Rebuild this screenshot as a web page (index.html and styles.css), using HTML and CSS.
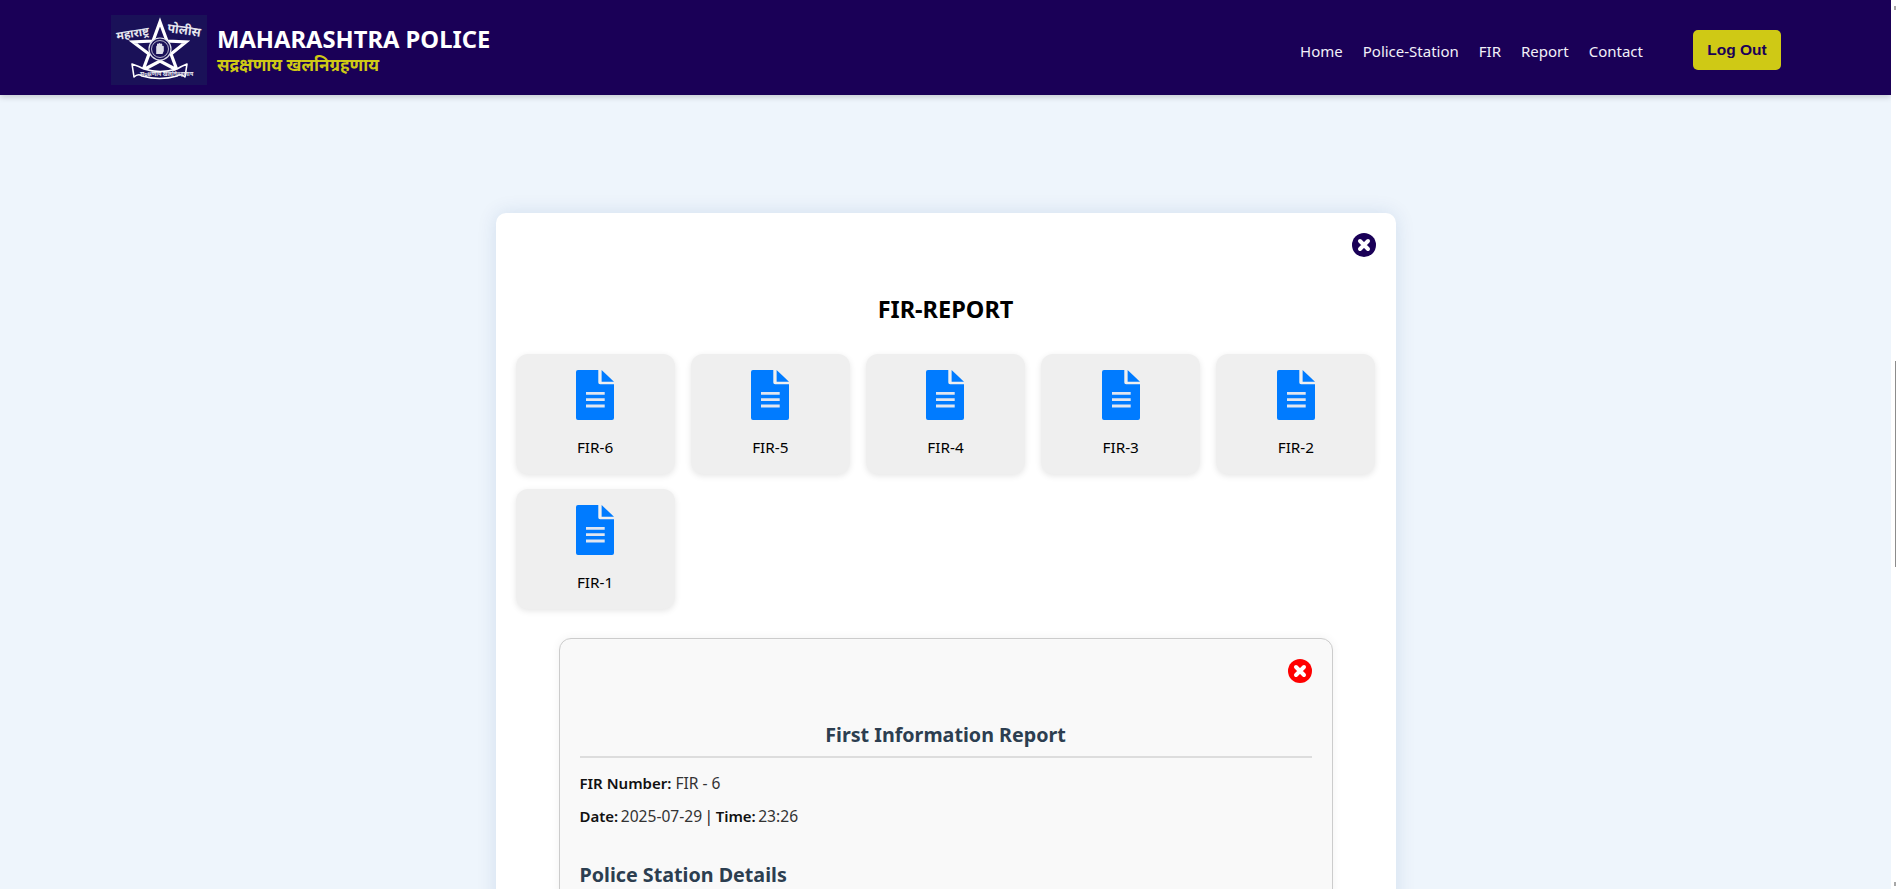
FILE: index.html
```html
<!DOCTYPE html>
<html lang="en">

<head>
    <meta charset="UTF-8">
    <meta name="viewport" content="width=device-width, initial-scale=1.0">
    <title>FIR Report</title>
    <link rel="stylesheet" href="styles.css">
</head>

<body>

    <div class="page">
        <header class="navbar">
            <div class="brand">
                <svg class="logo" viewBox="0 0 96 70" aria-hidden="true">
                    <rect width="96" height="70" fill="#1a1158"/>
                    <text class="logo_text" transform="translate(6 25) rotate(-9)" font-size="11.500">महाराष्ट्र</text>
                    <text class="logo_text" transform="translate(56 17) rotate(8)" font-size="12.500">पोलीस</text>
                    <path d="M49 7 L56 26 L75 27 L60 39 L66 55 L49 46 L32 55 L38 39 L22 27 L42 26 Z" fill="#1a1158" stroke="#fff" stroke-width="3.200" stroke-linejoin="miter"/>
                    <circle cx="49" cy="34" r="11" fill="#1a1158" stroke="#dfe0ea" stroke-width="1.200"/>
                    <circle cx="49" cy="34" r="8.500" fill="none" stroke="#dfe0ea" stroke-width=".8"/>
                    <path d="M45.200 39 V32 Q45.200 30.500 46 30.500 V29 Q46.800 28 47.500 29 V28.500 Q48.500 27.500 49.500 28.500 V29 Q50.500 28 51.200 29 V31 Q52.400 30.500 52.800 31.500 V36 L51.500 39 Z" fill="#dfe0ea"/>
                    <path d="M21 49 Q27 51 33 54 Q49 59 66 54 Q71 51 76 49 L74 62 Q70 58 66 61 Q49 66 31 61 Q27 58 23 62 Z" fill="#1a1158" stroke="#fff" stroke-width="1.600" stroke-linejoin="round"/>
                    <text class="logo_text" x="29" y="61" font-size="5.600">सद्रक्षणाय खलनिग्रहणाय</text>
                </svg>
                <div class="brand_text">
                    <h1>MAHARASHTRA POLICE</h1>
                    <p>सद्रक्षणाय खलनिग्रहणाय</p>
                </div>
            </div>
            <nav class="nav_links">
                <a href="#">Home</a>
                <a href="#">Police-Station</a>
                <a href="#">FIR</a>
                <a href="#">Report</a>
                <a href="#">Contact</a>
                <button class="logout">Log Out</button>
            </nav>
        </header>

        <main class="content">
            <section class="modal">
                <svg class="close_icon close_dark" viewBox="0 0 24 24" aria-hidden="true">
                    <circle cx="12" cy="12" r="12"/>
                    <path d="M8 8 L16 16 M16 8 L8 16"/>
                </svg>
                <h2 class="modal_title">FIR-REPORT</h2>

                <div class="fir_grid">
                    <div class="fir_card"><svg class="doc_icon" viewBox="0 0 38 50"><use href="#doc"/></svg><span>FIR-6</span></div>
                    <div class="fir_card"><svg class="doc_icon" viewBox="0 0 38 50"><use href="#doc"/></svg><span>FIR-5</span></div>
                    <div class="fir_card"><svg class="doc_icon" viewBox="0 0 38 50"><use href="#doc"/></svg><span>FIR-4</span></div>
                    <div class="fir_card"><svg class="doc_icon" viewBox="0 0 38 50"><use href="#doc"/></svg><span>FIR-3</span></div>
                    <div class="fir_card"><svg class="doc_icon" viewBox="0 0 38 50"><use href="#doc"/></svg><span>FIR-2</span></div>
                    <div class="fir_card"><svg class="doc_icon" viewBox="0 0 38 50"><use href="#doc"/></svg><span>FIR-1</span></div>
                </div>

                <article class="report">
                    <svg class="close_icon close_red" viewBox="0 0 24 24" aria-hidden="true">
                        <circle cx="12" cy="12" r="12"/>
                        <path d="M8 8 L16 16 M16 8 L8 16"/>
                    </svg>
                    <h3 class="report_title">First Information Report</h3>
                    <p class="line"><b>FIR Number:</b> FIR - 6</p>
                    <p class="line line_tight"><b>Date:</b> 2025-07-29 <span class="sep">|</span> <b>Time:</b> 23:26</p>
                    <h4 class="section_title">Police Station Details</h4>
                </article>
            </section>
        </main>
    </div>

    <div class="scroll_strip">
        <div class="scroll_thumb"></div>
    </div>

    <svg class="defs" aria-hidden="true">
        <symbol id="doc" viewBox="0 0 38 50">
            <path d="M2 0 H22.300 V12.500 A1.800 1.800 0 0 0 24.100 14.300 H38 V48 A2 2 0 0 1 36 50 H2 A2 2 0 0 1 0 48 V2 A2 2 0 0 1 2 0 Z" fill="#007bff"/>
            <path d="M25.600 0 L38 11.700 H25.600 Z" fill="#007bff"/>
            <path d="M10 23.300 H28.700 M10 29.600 H28.700 M10 36 H28.700" stroke="#e0e6f0" stroke-width="2.800"/>
        </symbol>
    </svg>

</body>

</html>
```

FILE: styles.css
```css
* {
    padding: 0;
    margin: 0;
    box-sizing: border-box;
}

html,
body {
    height: 889px;
    overflow: hidden;
    background: white;
    font-family: "Noto Sans", "Open Sans", sans-serif;
}

body {
    display: flex;
}

.page {
    flex: 1;
    height: 889px;
    overflow: hidden;
    background: #eef5fc;
}

/*scrollbar strip on the right*/
.scroll_strip {
    position: relative;
    display: flex;
    justify-content: flex-end;
    width: 5px;
    padding-top: 361px;
    background: white;
}

.scroll_strip::before,
.scroll_strip::after {
    content: "";
    position: absolute;
    right: 0;
    width: 2px;
    height: 4px;
    background: #a8a8a8;
}

.scroll_strip::before {
    top: 6px;
}

.scroll_strip::after {
    bottom: 3px;
}

.scroll_thumb {
    width: 1px;
    height: 206px;
    background: #8c8c8c;
}

/*navbar*/
.navbar {
    display: flex;
    align-items: center;
    justify-content: space-between;
    height: 95px;
    padding: 5px 110px 0 111px;
    background: #1a0057;
    box-shadow: 0 2px 6px rgba(0, 0, 0, .18);
}

.brand {
    display: flex;
    align-items: center;
    gap: 10px;
}

.logo {
    display: block;
    width: 96px;
    height: 70px;
}

.logo_text {
    fill: #e6e6ee;
    font-family: "Noto Sans", sans-serif;
    font-weight: 700;
}

.brand_text h1 {
    color: white;
    font-size: 23.750px;
    line-height: 28px;
    font-weight: 700;
}

.brand_text p {
    margin-top: 2px;
    color: #cfc915;
    font-size: 17px;
    line-height: 20px;
    font-weight: 700;
}

.nav_links {
    display: flex;
    align-items: center;
}

.nav_links a {
    margin-top: 2px;
    margin-right: 20px;
    color: #f2f0f8;
    font-size: 15px;
    text-decoration: none;
}

.logout {
    width: 88px;
    height: 40px;
    margin-left: 30px;
    border: none;
    border-radius: 5px;
    background: #cfc915;
    color: #1a0057;
    font-family: "Liberation Sans", sans-serif;
    font-size: 15.500px;
    font-weight: 700;
}

/*modal*/
.content {
    display: flex;
    justify-content: center;
    padding-top: 118px;
}

.modal {
    position: relative;
    width: 900px;
    height: 900px;
    padding: 20px;
    border-radius: 10px;
    background: white;
    box-shadow: 0 0 20px rgba(0, 60, 130, .12);
}

.close_icon {
    position: absolute;
    top: 20px;
    right: 20px;
    display: block;
    width: 24px;
    height: 24px;
}

.close_icon path {
    fill: none;
    stroke: white;
    stroke-width: 4;
    stroke-linecap: round;
}

.close_dark {
    fill: #1a0057;
}

.close_red {
    fill: red;
}

.modal_title {
    margin-top: 60px;
    font-size: 23.500px;
    line-height: 32px;
    font-weight: 700;
    text-align: center;
    color: black;
}

.fir_grid {
    display: grid;
    grid-template-columns: repeat(5, 1fr);
    gap: 15px 16px;
    margin-top: 29px;
}

.fir_card {
    display: flex;
    flex-direction: column;
    align-items: center;
    height: 120px;
    padding-top: 16px;
    border-radius: 12px;
    background: #efefef;
    box-shadow: 0 2px 6px rgba(0, 0, 0, .1);
    font-size: 15.300px;
    color: black;
}

.doc_icon {
    display: block;
    width: 38px;
    height: 50px;
    margin-bottom: 17px;
}

.defs {
    display: none;
}

/*report*/
.report {
    position: relative;
    width: 774px;
    height: 400px;
    margin: 29px auto 0;
    padding: 20px;
    border: 1px solid #ccc;
    border-radius: 12px;
    background: #f9f9f9;
    box-shadow: 0 0 10px rgba(0, 0, 0, .06);
}

.report_title {
    margin-top: 61px;
    padding-bottom: 7px;
    border-bottom: 2px solid #ddd;
    color: #2c3e50;
    font-size: 19.700px;
    line-height: 29px;
    font-weight: 700;
    text-align: center;
}

.line {
    margin-top: 10px;
    color: #333;
    font-size: 15.600px;
    line-height: 23px;
}

.line:first-of-type {
    margin-top: 14px;
}

.line_tight {
    word-spacing: -1.600px;
}

.line b {
    color: #111;
    font-size: 15px;
    font-weight: 600;
}

.sep {
    color: #111;
}

.section_title {
    margin-top: 33px;
    color: #2c3e50;
    font-size: 19.700px;
    font-weight: 700;
}
```
